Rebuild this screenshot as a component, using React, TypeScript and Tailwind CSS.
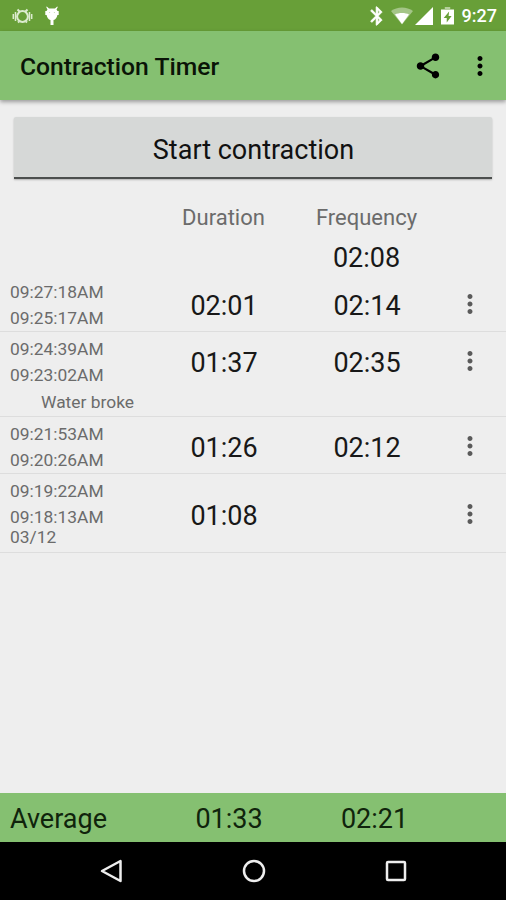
import { MdBluetooth, MdMoreVert, MdShare } from "react-icons/md";

type Contraction = {
  end: string;
  start: string;
  date?: string;
  note?: string;
  duration: string;
  frequency?: string;
};

const contractions: Contraction[] = [
  {
    end: "09:27:18AM",
    start: "09:25:17AM",
    duration: "02:01",
    frequency: "02:14",
  },
  {
    end: "09:24:39AM",
    start: "09:23:02AM",
    note: "Water broke",
    duration: "01:37",
    frequency: "02:35",
  },
  {
    end: "09:21:53AM",
    start: "09:20:26AM",
    duration: "01:26",
    frequency: "02:12",
  },
  {
    end: "09:19:22AM",
    start: "09:18:13AM",
    date: "03/12",
    duration: "01:08",
  },
];

function StatusBar() {
  return (
    <div className="flex h-[31px] shrink-0 items-center justify-between bg-[#689f38] pl-3 pr-[9px] pt-px text-white">
      <div className="flex items-center gap-3">
        {/* vibrating alarm */}
        <svg width="21" height="20" viewBox="0 0 21 20" fill="none" stroke="#dcebcf">
          <circle cx="10.5" cy="10.5" r="5.4" strokeWidth="2" />
          <path d="M5.5 3.5L8 6M15.5 3.5L13 6M6 16.5l1-1M15 16.500l-1-1" strokeWidth="2" />
          <path d="M3.500 6v9M17.500 6v9M1.300 8v5M19.700 8v5" strokeWidth="1.500" />
        </svg>
        {/* debug robot */}
        <svg width="14" height="20" viewBox="0 0 14 20" fill="white">
          <path d="M1.800.5L4 2.600h6L12.200.5l.6.5-1.300 2.600 1 1.400h1.200v4h-1.300c-.4 2.600-1.800 4.600-3.900 5.100V19h-3v-4.900C3.400 13.600 2 11.600 1.600 9H.3V5h1.200l1-1.400L1.200 1z" />
          <circle cx="4.600" cy="6.500" r=".6" fill="#c3dcae" />
          <circle cx="9.400" cy="6.500" r=".6" fill="#c3dcae" />
        </svg>
      </div>
      <div className="flex items-center">
        <MdBluetooth size={22} className="mr-[3px] [&>path:last-child]:stroke-white [&>path:last-child]:stroke-[0.7]" />
        <svg width="22" height="18" viewBox="0 0 22 18" className="mr-[2px]">
          <path d="M0 4C6-.8 16-.8 22 4L11 17.500z" fill="white" fillOpacity=".4" />
          <path d="M4 7.500c3.500-2 10.500-2 14 0L11 17z" fill="white" />
        </svg>
        <svg width="18" height="18" viewBox="0 0 18 18" className="mr-2" fill="white">
          <path d="M18 0v18H0z" />
        </svg>
        <svg width="13" height="18" viewBox="0 0 12 18" className="mr-2" preserveAspectRatio="none">
          <path d="M3.500 0h5v2H12v2H0V2h3.500z" fill="white" fillOpacity=".5" />
          <path d="M0 3h12v14.500H0z" fill="white" />
          <path d="M7.500 4.500L2.500 11H5.300v4.500l4.500-6.500H7z" fill="#689f38" />
        </svg>
        <span className="text-[18px] font-medium leading-none">9:27</span>
      </div>
    </div>
  );
}

function ContractionRow({ item }: { item: Contraction }) {
  return (
    <li className="border-b border-[#dddddd]">
      <div className="grid grid-cols-[152px_144px_142px_64px] items-center">
        <div className={item.date ? "pb-2 pl-[10px] pt-1" : "pl-[10px] pt-1"}>
          <p className="text-[17.4px] leading-[26px]">{item.end}</p>
          <p className="text-[17.4px] leading-[26px]">{item.start}</p>
          {item.date && <p className="text-[17.4px] leading-[14px]">{item.date}</p>}
        </div>
        <span className="pt-[5px] text-center text-[27px] leading-8 text-[#181818]">
          {item.duration}
        </span>
        <span className="pt-[5px] text-center text-[27px] leading-8 text-[#181818]">
          {item.frequency}
        </span>
        <button className="flex justify-center pt-px text-[#5a5a5a]">
          <MdMoreVert size={30} />
        </button>
      </div>
      {item.note && (
        <p className="pl-[41px] text-[17.4px] leading-7">{item.note}</p>
      )}
    </li>
  );
}

export default function App() {
  return (
    <div className="flex h-[900px] w-[506px] flex-col overflow-hidden bg-[#eeeeee] font-['Roboto',sans-serif] text-[#6b6b6b]">
      <StatusBar />
      <header className="flex h-[69px] shrink-0 items-center bg-[#85c071] pl-5 pr-[11px] text-[#0a1407] shadow-[0_2px_4px_rgba(0,0,0,0.35)]">
        <h1 className="flex-1 pt-[3px] text-[24.7px] font-medium">Contraction Timer</h1>
        <button className="mr-[22px] text-black">
          <MdShare size={30} />
        </button>
        <button className="text-black">
          <MdMoreVert size={30} />
        </button>
      </header>

      <main className="flex-1">
        <div className="px-[14px] pt-[17px]">
          <button className="h-[62px] w-full rounded-t-[2px] border-b-2 border-[#4c4f4e] bg-[#d6d8d7] pl-px pt-[6px] text-[27px] text-[#111111] shadow-[0_1px_2px_rgba(0,0,0,0.25)]">
            Start contraction
          </button>
        </div>
        <div className="mt-[23px] grid grid-cols-[152px_143px_143px] pb-px text-center">
          <span className="col-start-2 text-[22px] leading-8">Duration</span>
          <span className="text-[22px] leading-8">Frequency</span>
          <span className="col-start-3 pt-2 text-[27px] leading-8 text-[#181818]">02:08</span>
        </div>
        <ul>
          {contractions.map((item) => (
            <ContractionRow key={item.end} item={item} />
          ))}
        </ul>
      </main>

      <footer className="grid h-[49px] shrink-0 grid-cols-[156px_146px_145px] items-center bg-[#85c071] pt-[3px] text-[27px] text-[#10240c]">
        <span className="pl-[10px]">Average</span>
        <span className="text-center">01:33</span>
        <span className="text-center">02:21</span>
      </footer>
      <nav className="flex h-[58px] shrink-0 items-center justify-center gap-[118px] bg-black pl-[2px]">
        <svg width="24" height="24" viewBox="0 0 24 24" fill="none" stroke="#eeeeee" strokeWidth="2.5">
          <path d="M20.500 2v20L2 12z" strokeLinejoin="round" />
        </svg>
        <svg width="24" height="24" viewBox="0 0 24 24" fill="none" stroke="#eeeeee" strokeWidth="2.5">
          <circle cx="12" cy="12" r="10" />
        </svg>
        <svg width="24" height="24" viewBox="0 0 24 24" fill="none" stroke="#eeeeee" strokeWidth="2.5">
          <rect x="3" y="3" width="18" height="18" rx="1" />
        </svg>
      </nav>
    </div>
  );
}
